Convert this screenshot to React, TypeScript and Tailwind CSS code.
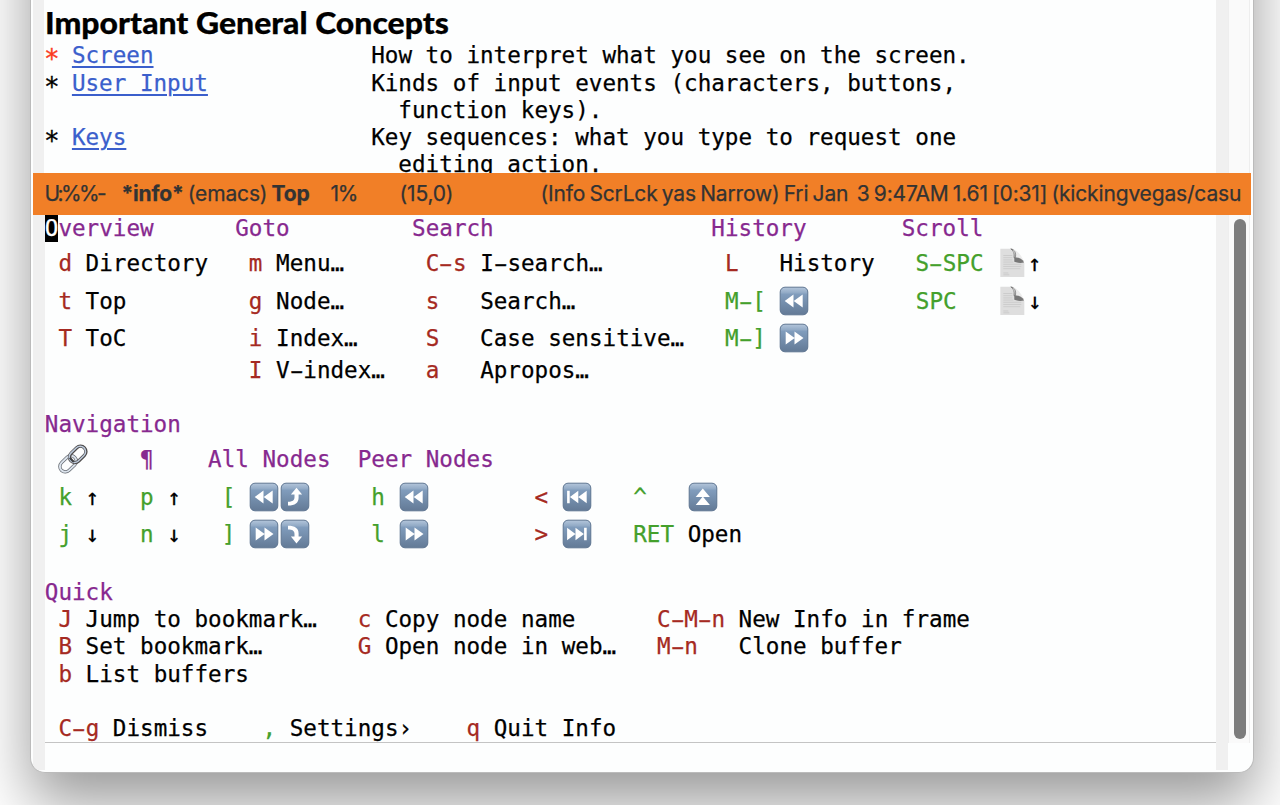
import type { ReactNode } from "react";

type IconName = "rewind" | "forward" | "first" | "last" | "up" | "curveUp" | "curveDown";

const GLYPHS: Record<IconName, ReactNode> = {
  rewind: <path d="M14 7.600v12.800L5.200 14zM23.200 7.600v12.800L14.200 14z" />,
  forward: <path d="M6.200 7.600v12.800L15.200 14zM15 7.600v12.800L24 14z" />,
  first: <path d="M4.600 7.800h2.600v12.400H4.600zM15.800 7.800v12.400L7.400 14zM24.200 7.800v12.400L15.800 14z" />,
  last: <path d="M21.600 7.800h2.600v12.400h-2.600zM4.600 7.800v12.400L13 14zM13 7.800v12.400l8.400-6.200z" />,
  up: <path d="M14.300 5.400L21.400 14H7.200zM14.300 13.600l7.100 8.400H7.200z" />,
  curveUp: <path d="M16 4.800l5.600 6.800h-3.500v3.200c0 5-3.500 7.800-10.600 7.800v-3.800c4.500 0 6.500-1.500 6.500-4.500v-2.700h-3.600z" />,
  curveDown: <path d="M16 23.400l5.600-6.800h-3.500v-3.200c0-5-3.500-7.600-10.600-7.600v3.700c4.500 0 6.500 1.400 6.500 4.400v2.700h-3.600z" />,
};

function Key({ name }: { name: IconName }) {
  return (
    <svg className="-mt-3 -mb-3 inline-block h-[30px] w-[30.6px] align-[5px]" viewBox="-0.300 -0.700 30.600 30">
      <defs>
        <linearGradient id="keyFace" x1="0" y1="0" x2="0" y2="1">
          <stop offset="0" stopColor="#b4c6db" />
          <stop offset="0.220" stopColor="#8fa8c4" />
          <stop offset="0.240" stopColor="#819dbd" />
          <stop offset="1" stopColor="#637a96" />
        </linearGradient>
      </defs>
      <rect x="0.900" y="0.500" width="27.600" height="27.600" rx="4.800" fill="url(#keyFace)" stroke="#5d7491" />
      <g fill="#fff" transform="translate(0.200 0.300)">{GLYPHS[name]}</g>
    </svg>
  );
}

function Page() {
  return (
    <svg className="-mt-3 -mb-3 inline-block h-[30px] w-[30.6px] align-[5px]" viewBox="0.700 0 30.600 30">
      <defs>
        <linearGradient id="curl" x1="0" y1="0" x2="1" y2="0.600">
          <stop offset="0" stopColor="#444" />
          <stop offset="0.350" stopColor="#999" />
          <stop offset="0.550" stopColor="#eee" />
          <stop offset="1" stopColor="#aaa" />
        </linearGradient>
      </defs>
      <path d="M4 .8h12L28 15v14H4z" fill="#dedede" />
      <path d="M7 7.500h9M7 9.700h9M7 11.900h9M7 14.100h10M7 16.300h18M7 18.500h18M7 20.700h17M7 25h5M7 26.800h6" stroke="#c8c8c8" strokeWidth=".8" />
      <path d="M15.500 .8C21 2 26 8 28 15c-3-3.500-6-5-9.500-5.200C19 6 18 3 15.500 .8z" fill="#ececec" />
      <path d="M14.500 .8c4.200 1 5.500 4 4.600 9h-1.400C18 5 17.500 3 14.500 .8z" fill="url(#curl)" stroke="#555" strokeWidth=".5" />
      <path d="M18 9.600c4-.6 8 1 9.800 4.800-3 .8-6.500 .6-9.800-.6z" fill="#777" />
    </svg>
  );
}

function Link() {
  return (
    <svg className="-mt-3 -mb-3 inline-block h-[30px] w-[30.6px] align-[5px]" viewBox="0.700 0 30.600 30">
      <g fill="none">
        <g transform="translate(10.800 19.800) rotate(-44)">
          <rect x="-9.300" y="-5.400" width="18.600" height="10.800" rx="5.400" stroke="#62676e" strokeWidth="3.300" />
          <rect x="-9.300" y="-5.400" width="18.600" height="10.800" rx="5.400" stroke="#dbe3ec" strokeWidth="1.900" />
        </g>
        <g transform="translate(20.400 10.400) rotate(-44)">
          <rect x="-9.300" y="-5.400" width="18.600" height="10.800" rx="5.400" stroke="#4d4a4a" strokeWidth="3.400" />
          <rect x="-9.500" y="-5.700" width="18.600" height="10.800" rx="5.400" stroke="#bccadb" strokeWidth="1.500" />
        </g>
        <path d="M12.500 13.800l4 4.200" stroke="#3f4145" strokeWidth="2.200" />
      </g>
    </svg>
  );
}

/** Draws the wide dash of the terminal face from a plain hyphen. */
function dashed(text: string) {
  return text.split("-").map((part, i) => (
    <span key={i}>
      {i > 0 && <span className="inline-block scale-x-[1.8]">-</span>}
      {part}
    </span>
  ));
}

const H = ({ children }: { children: string }) => <span className="text-[#87298f]">{children}</span>;
const R = ({ children }: { children: string }) => <span className="text-[#a52a22]">{dashed(children)}</span>;
const G = ({ children }: { children: string }) => <span className="text-[#44a02c]">{dashed(children)}</span>;
const A = ({ children }: { children: string }) => (
  <span className="text-[#3b5fcc] underline decoration-[1.5px] underline-offset-[3px]">{children}</span>
);
const Star = ({ red = false }: { red?: boolean }) => (
  <span
    className={
      red
        ? "inline-block translate-y-[4px] scale-[1.15] text-[#fb3a22]"
        : "inline-block translate-y-[4px] scale-[1.15]"
    }
  >
    *
  </span>
);

const Row = ({ children }: { children?: ReactNode }) => <div className="h-[27.25px] shrink-0">{children}</div>;
const Tall = ({ children }: { children?: ReactNode }) => <div className="h-[37.75px] shrink-0 pt-[7.7px]">{children}</div>;

function InfoBuffer() {
  return (
    <div className="flex h-[172.6px] flex-col overflow-hidden pl-[12.2px]">
      <h1 className="h-[42.3px] shrink-0 origin-left scale-x-[1.03] font-[Lato] text-[31px] leading-[44px] font-black">
        Important General Concepts
      </h1>
      <Row><Star red /> <A>Screen</A>{"                How to interpret what you see on the screen."}</Row>
      <Row><Star /> <A>User Input</A>{"            Kinds of input events (characters, buttons,"}</Row>
      <Row>{"                          function keys)."}</Row>
      <Row><Star /> <A>Keys</A>{"                  Key sequences: what you type to request one"}</Row>
      <Row>{"                          editing action."}</Row>
    </div>
  );
}

function ModeLine() {
  return (
    <div className="flex h-[42px] w-[1217.5px] shrink-0 items-center overflow-hidden bg-[#f17f27] pl-[11.5px] font-[Inter] text-[21px] tracking-[-0.16px] text-[#333] [word-spacing:-1.5px]">
      <span className="w-[77px] shrink-0 tracking-[-2.6px]">U:%%-</span>
      <span className="w-[209px] shrink-0"><b>*info*</b> (emacs) <b>Top</b></span>
      <span className="w-[69px] shrink-0 tracking-[-1.4px]">1%</span>
      <span className="w-[141px] shrink-0">(15,0)</span>
      <span className="shrink-0">{"(Info ScrLck yas Narrow) Fri Jan  3 9:47AM 1.61 [0:31] (kickingvegas/casu"}</span>
    </div>
  );
}

function MenuBuffer() {
  return (
    <div className="flex h-[528.4px] flex-col border-b border-[#c4c4c4]">
      <Row><span className="inline-block h-[27px] bg-black text-white">O</span><H>verview      Goto         Search                History       Scroll</H></Row>
      <Tall> <R>d</R> Directory   <R>m</R> Menu…{"      "}<R>C-s</R>{" I"}{dashed("-search")}…{"         "}<R>L</R>{"   History   "}<G>S-SPC</G> <Page />↑</Tall>
      <Tall> <R>t</R>{" Top         "}<R>g</R> Node…{"      "}<R>s</R>{"   Search…           "}<G>M-[</G> <Key name="rewind" /><span className="inline-block w-[105.8px]" /><G>SPC</G>{"   "}<Page />↓</Tall>
      <Tall> <R>T</R>{" ToC         "}<R>i</R> Index…{"     "}<R>S</R>{"   Case sensitive…   "}<G>M-]</G> <Key name="forward" /></Tall>
      <div className="h-[3px]" />
      <Row>{"               "}<R>I</R>{" V"}{dashed("-index")}…{"   "}<R>a</R>{"   Apropos…"}</Row>
      <Row />
      <Row><H>Navigation</H></Row>
      <Tall> <Link /><span className="inline-block w-[51.1px]" /><H>¶    All Nodes  Peer Nodes</H></Tall>
      <Tall> <G>k</G> ↑{"   "}<G>p</G> ↑{"   "}<G>[</G> <Key name="rewind" /><Key name="curveUp" /><span className="inline-block w-[61.2px]" /><G>h</G> <Key name="rewind" /><span className="inline-block w-[105.5px]" /><R>{"<"}</R> <Key name="first" />{"   "}<G>^</G>{"   "}<Key name="up" /></Tall>
      <Tall> <G>j</G> ↓{"   "}<G>n</G> ↓{"   "}<G>]</G> <Key name="forward" /><Key name="curveDown" /><span className="inline-block w-[61.2px]" /><G>l</G> <Key name="forward" /><span className="inline-block w-[105.5px]" /><R>{">"}</R> <Key name="last" />{"   "}<G>RET</G> Open</Tall>
      <Row />
      <Row><H>Quick</H></Row>
      <Row> <R>J</R> Jump to bookmark…{"   "}<R>c</R>{" Copy node name      "}<R>C-M-n</R> New Info in frame</Row>
      <Row> <R>B</R> Set bookmark…{"       "}<R>G</R>{" Open node in web…   "}<R>M-n</R>{"   Clone buffer"}</Row>
      <Row> <R>b</R> List buffers</Row>
      <Row />
      <Row> <R>C-g</R>{" Dismiss    "}<G>,</G>{" Settings›    "}<R>q</R> Quit Info</Row>
    </div>
  );
}

export default function App() {
  return (
    <div className="h-[805px] w-[1280px] overflow-hidden bg-white pl-[30px]">
      <div className="-mt-[200px] h-[973.4px] w-[1223.5px] overflow-hidden rounded-[15px] border-r border-b border-l border-[#bbb] bg-[#fdfefe] pt-[200px] pl-[2px] whitespace-pre text-black shadow-[0_30px_60px_rgba(0,0,0,0.4)]">
        <div className="flex h-[769.6px] flex-col font-['DejaVu_Sans_Mono',monospace] text-[22.6px] leading-[27.25px] [-webkit-text-stroke:0.25px]">
          <div className="flex h-[172.6px] shrink-0">
            <div className="w-[1183px] border-l-[11.5px] border-[#f0f0f0]"><div className="-ml-[11.5px]"><InfoBuffer /></div></div>
            <div className="w-[12px] bg-[#f0f0f0]" />
            <div className="w-[22px] border-x border-[#eee] bg-[#fafafa]" />
          </div>
          <ModeLine />
          <div className="flex h-[555px] shrink-0">
            <div className="w-[11.5px] shrink-0 bg-[#f0f0f0]" />
            <div className="w-[1171.5px] shrink-0 pl-[0.3px] pt-[0.3px]"><MenuBuffer /></div>
            <div className="w-[12px] shrink-0 bg-[#f0f0f0]" />
            <div className="flex h-[528px] w-[22px] justify-end border-x border-[#eee] bg-[#fafafa] pt-[4.5px] pr-[3.2px]">
              <div className="h-[520px] w-[12px] rounded-full bg-[#7d7d7d]" />
            </div>
          </div>
        </div>
      </div>
    </div>
  );
}
